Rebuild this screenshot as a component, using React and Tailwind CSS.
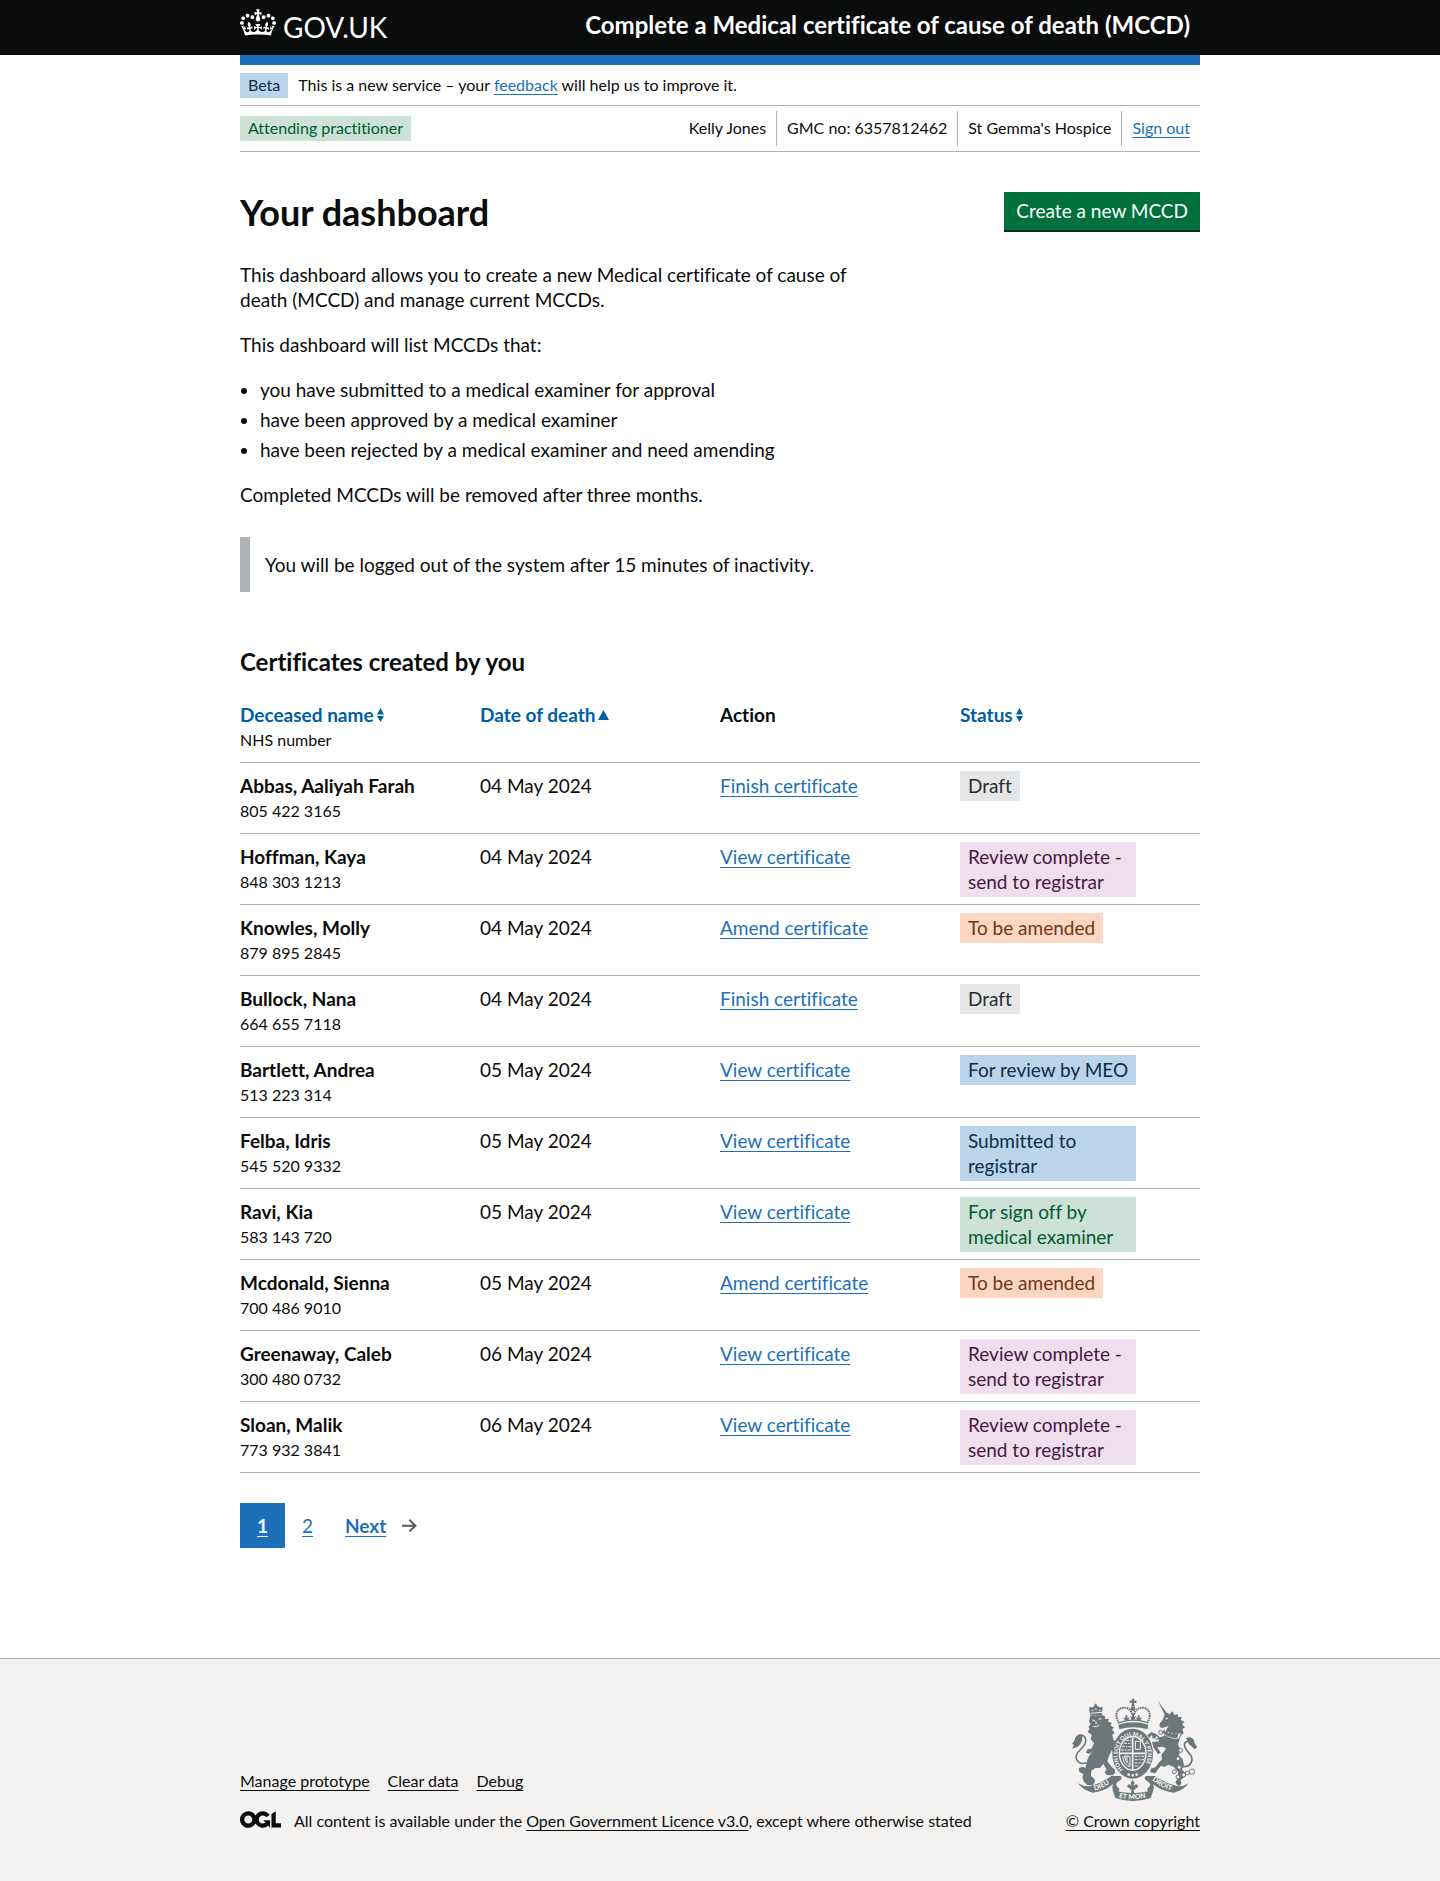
import React from "react";

const TAGS = {
  grey: "bg-[#e5e6e7] text-[#282d30]",
  purple: "bg-[#efdfed] text-[#491644]",
  orange: "bg-[#fcd6c3] text-[#6e3619]",
  blue: "bg-[#bbd4ea] text-[#0c2d4a]",
  green: "bg-[#cce2d8] text-[#005a30]",
};

const DRAFT = ["Finish certificate", "Draft", "grey"];
const COMPLETE = ["View certificate", "Review complete - send to registrar", "purple"];
const AMEND = ["Amend certificate", "To be amended", "orange"];

const ROWS = [
  ["Abbas, Aaliyah Farah", "805 422 3165", "04 May 2024", ...DRAFT],
  ["Hoffman, Kaya", "848 303 1213", "04 May 2024", ...COMPLETE],
  ["Knowles, Molly", "879 895 2845", "04 May 2024", ...AMEND],
  ["Bullock, Nana", "664 655 7118", "04 May 2024", ...DRAFT],
  ["Bartlett, Andrea", "513 223 314", "05 May 2024", "View certificate", "For review by MEO", "blue"],
  ["Felba, Idris", "545 520 9332", "05 May 2024", "View certificate", "Submitted to registrar", "blue"],
  ["Ravi, Kia", "583 143 720", "05 May 2024", "View certificate", "For sign off by medical examiner", "green"],
  ["Mcdonald, Sienna", "700 486 9010", "05 May 2024", ...AMEND],
  ["Greenaway, Caleb", "300 480 0732", "06 May 2024", ...COMPLETE],
  ["Sloan, Malik", "773 932 3841", "06 May 2024", ...COMPLETE],
];

function Link({ className = "text-[#1d70b8]", children }) {
  return (
    <a
      href="#"
      className={
        "underline decoration-1 underline-offset-[3px] [text-decoration-skip-ink:none] " + className
      }
    >
      {children}
    </a>
  );
}

function Container({ className = "", children }) {
  return <div className={"mx-auto w-full max-w-[960px] " + className}>{children}</div>;
}

function StatusTag({ tone, children }) {
  // Short labels stay on one line; longer ones wrap inside the tag.
  const width = children.length > 18 ? "max-w-44" : "whitespace-nowrap";
  return (
    <strong className={`block w-fit px-2 pt-[2px] pb-[3px] font-normal ${width} ${TAGS[tone]}`}>
      {children}
    </strong>
  );
}

function Crown() {
  return (
    <svg viewBox="0 0 132 97" className="h-[27px] w-9" fill="currentColor" aria-hidden="true">
      <path d="M25 30.2c3.5 1.5 7.7-.2 9.1-3.7 1.5-3.6-.2-7.8-3.9-9.2-3.6-1.4-7.6.3-9.1 3.9-1.4 3.5.3 7.5 3.9 9zM9 39.5c3.6 1.5 7.8-.2 9.2-3.7 1.5-3.6-.2-7.8-3.9-9.1-3.6-1.5-7.6.2-9.1 3.8-1.4 3.5.3 7.5 3.8 9zM4.4 57.2c3.5 1.5 7.7-.2 9.1-3.8 1.5-3.6-.2-7.7-3.9-9.1-3.5-1.5-7.6.3-9.1 3.8-1.4 3.5.3 7.6 3.9 9.1zm38.3-21.4c3.5 1.5 7.7-.2 9.1-3.8 1.5-3.6-.2-7.7-3.9-9.1-3.6-1.5-7.6.3-9.1 3.8-1.3 3.6.4 7.7 3.9 9.1zm64.4-5.6c-3.6 1.5-7.8-.2-9.1-3.7-1.5-3.6.2-7.8 3.8-9.2 3.6-1.4 7.7.3 9.2 3.9 1.3 3.5-.4 7.5-3.9 9zm15.9 9.3c-3.6 1.5-7.7-.2-9.1-3.7-1.5-3.6.2-7.8 3.7-9.1 3.6-1.5 7.7.2 9.2 3.8 1.5 3.5-.3 7.5-3.8 9zm4.7 17.7c-3.6 1.5-7.8-.2-9.2-3.8-1.5-3.6.2-7.7 3.9-9.1 3.6-1.5 7.7.3 9.2 3.8 1.3 3.5-.4 7.6-3.9 9.1zM89.3 35.8c-3.6 1.5-7.8-.2-9.2-3.8-1.4-3.6.2-7.7 3.9-9.1 3.6-1.5 7.7.3 9.2 3.8 1.4 3.6-.3 7.7-3.9 9.1zM69.7 17.7l8.9 4.7V9.3l-8.9 2.8c-.2-.3-.5-.6-.9-.9L72.4 0H59.6l3.5 11.2c-.3.3-.6.5-.9.9l-8.8-2.8v13.1l8.8-4.7c.3.3.6.7.9.9l-5 15.4v.1c-.2.8-.4 1.6-.4 2.4 0 4.1 3.1 7.5 7 8.1h.2c.3 0 .7.1 1 .1.4 0 .7 0 1-.1h.2c4-.6 7.1-4.1 7.1-8.1 0-.8-.1-1.7-.4-2.4V34l-5.1-15.4c.4-.2.7-.6 1-.9zM66 92.8c16.9 0 32.8 1.1 47.1 3.2 4-16.9 8.9-26.7 14-33.5l-9.6-3.4c1 4.9 1.1 7.2 0 10.2-1.5-1.4-3-4.3-4.2-8.7L108.6 76c2.8-2 5-3.2 7.5-3.3-4.4 9.4-10 11.9-13.6 11.2-4.3-.8-6.3-4.6-5.6-7.9 1-4.7 5.7-5.9 8-.5 4.3-8.7-3-11.4-7.6-8.8 7.1-7.2 7.9-13.5 2.1-21.1-8 6.1-8.1 12.3-4.5 20.8-4.7-5.4-12.1-2.5-9.5 6.2 3.4-5.2 7.9-2 7.2 3.1-.6 4.3-6.4 7.8-13.5 7.2-10.3-.9-10.9-8-11.2-13.8 2.5-.5 7.1 1.8 11 7.3L80.2 60c-4.1 4.4-8 5.3-12.3 5.4 1.4-4.4 8-11.6 8-11.6H55.5s6.4 7.2 7.9 11.6c-4.2-.1-8-1-12.3-5.4l1.4 16.4c3.9-5.5 8.5-7.7 10.9-7.3-.3 5.8-.9 12.8-11.1 13.8-7.2.6-12.9-2.9-13.5-7.2-.7-5 3.8-8.3 7.1-3.1 2.7-8.7-4.6-11.6-9.4-6.2 3.7-8.5 3.6-14.7-4.6-20.8-5.8 7.6-5 13.9 2.2 21.1-4.7-2.6-11.9.1-7.7 8.8 2.3-5.5 7.1-4.2 8.1.5.7 3.3-1.3 7.1-5.7 7.9-3.5.7-9-1.8-13.5-11.2 2.5.1 4.7 1.3 7.5 3.3l-4.7-15.4c-1.2 4.4-2.7 7.2-4.3 8.7-1.1-3-.9-5.3 0-10.2l-9.5 3.4c5 6.9 9.9 16.7 14 33.5 14.8-2.1 30.8-3.2 47.7-3.2z" />
    </svg>
  );
}

function Crest() {
  const ink = "#6d7779";
  const paper = "#f3f2f1";
  return (
    <svg viewBox="60 51 390 315" className="h-[105px] w-[130px]" aria-hidden="true">
      <defs>
        <path id="garter" d="M219 269 A45 57 0 1 1 277 269" />
        <path id="scroll-left" d="M134 332 Q162 324 188 304" />
        <path id="scroll-right" d="M306 301 Q332 322 366 333" />
        <path id="scroll-mid" d="M206 353 Q248 363 296 351" />
      </defs>

      {/* lion */}
      <g fill={ink}>
        <path d="M117 90 L119 80 Q126 84 130 80 L134 76 L134 71 L140 71 L140 76 L146 81 Q152 83 158 80 L155 104 L122 107 Z" />
        <path d="M121 108 L156 104 L166 110 L164 116 L178 118 L173 124 L186 130 L181 136 L192 143 L186 149 L194 158 L187 164 L190 178 L200 188 L203 200 L194 204 L199 214 L190 222 L186 210 L176 230 L172 244 L186 262 L194 268 L196 278 L188 286 L170 285 L164 277 L170 269 L160 252 L150 264 L136 264 L124 272 L123 288 L133 296 L135 306 L128 316 L112 315 L102 306 L97 292 L100 282 L88 276 L86 264 L98 260 L106 264 L110 246 C113 232 122 224 126 214 L118 222 L108 218 L112 208 L124 206 L132 190 L122 178 L125 164 L113 156 L118 148 L116 140 L122 132 L117 124 Z" />
      </g>
      <g fill="none" stroke={paper} strokeWidth="3">
        <path d="M125 91h5M135 87h5M147 91h5M122 100l34-3" />
        <path d="M127 120l8 2M145 118l10-2M137 124l2 9M130 139q10 4 18-3" />
      </g>
      <path d="M108 248 C84 258 66 232 90 210 C112 190 112 172 96 166 C84 163 78 172 84 180" fill="none" stroke={ink} strokeWidth="5" />
      <path d="M92 162 Q76 166 74 180 L66 192 L72 194 L66 206 L80 202 L90 194 Q100 180 96 168 Z" fill={ink} />

      {/* royal crown */}
      <g fill={ink}>
        <path d="M245 56h8l-1 7 7-2v9l-7-2 2 11h-10l2-11-7 2v-9l7 2z" />
        <circle cx="249" cy="86" r="7" />
        <path d="M205 134 Q249 120 295 134 L292 148 Q249 136 208 148 Z" />
        <path d="M225 122l-5-10 6 2 0-8 6 0 0 8 7-2-5 10zM262 122l-5-10 6 2 0-8 6 0 0 8 7-2-5 10zM244 120l-3-12 5 2 0-8 6 0 0 8 6-2-4 12z" />
      </g>
      <path d="M208 130 C188 100 206 82 224 83 C238 84 244 92 246 104 M291 130 C310 100 292 82 276 83 C262 84 255 92 252 104" fill="none" stroke={ink} strokeWidth="6" strokeDasharray="5 2" />
      <path d="M210 127 Q249 114 290 127" fill="none" stroke={ink} strokeWidth="4" />

      {/* garter and shield */}
      <ellipse cx="248" cy="221" rx="61" ry="75" fill={ink} />
      <ellipse cx="248" cy="220" rx="42" ry="53" fill={paper} />
      <ellipse cx="248" cy="220" rx="38" ry="48" fill={ink} />
      <g fill="none" stroke={paper}>
        <path d="M248 172v96M210 220h76" strokeWidth="5" />
        <path d="M222 190h22M215 200h29M213 210h30M228 181h16M254 229h30M254 239h28M254 249h22M254 258h14" strokeWidth="3" strokeDasharray="9 3 5 3" />
        <path d="M256 184h15v24h-15z" strokeWidth="3" />
        <path d="M218 232q4 24 22 28M224 230q2 16 14 24M231 229v18M218 232q10-8 22-2v28" strokeWidth="3" />
      </g>
      <g fill={paper} fontFamily="Lato, sans-serif" fontWeight="900" fontSize="17">
        <text>
          <textPath href="#garter">HONI SOIT QUI MAL Y PENSE</textPath>
        </text>
      </g>
      <g fill={paper}>
        <circle cx="236" cy="284" r="4" />
        <circle cx="248" cy="286" r="4" />
        <circle cx="260" cy="284" r="4" />
      </g>

      {/* unicorn */}
      <path d="M324 63 L352 101 L345 106 Z" fill={ink} />
      <path
        fill={ink}
        d="M343 106 L352 98 L358 103 L368 94 L372 104 L384 103 L384 111 L396 112 L392 120 L404 126 L396 132 L405 142 L397 148 L401 160 L393 166 L388 180 L384 194 L391 208 L387 226 L398 238 L402 256 L396 268 L406 280 L402 292 L392 300 L394 312 L386 319 L376 308 L384 292 L384 276 L372 262 L356 254 L344 260 L332 258 L324 268 L316 280 L301 277 L302 266 L316 262 L328 246 L336 238 L334 224 L348 206 L340 200 L322 202 L332 218 L324 223 L310 202 L306 186 L328 184 L322 172 L308 176 L306 164 L298 174 L292 166 L304 156 L318 162 L330 172 L342 168 L348 150 L356 138 L344 142 L334 144 L328 138 L330 130 L338 120 Z"
      />
      <path d="M346 117l8-2" stroke={paper} strokeWidth="3" />
      <path d="M340 146 Q362 164 392 160 L386 176 Q356 178 336 158 Z" fill={paper} />
      <path d="M342 147l4 8 5-4 4 8 6-4 5 7 6-5 6 5 8-4-4 16q-24 2-44-16z" fill={ink} />
      <path d="M398 260 C420 262 436 240 418 220 C402 204 398 188 412 184 C424 180 430 188 428 196" fill="none" stroke={ink} strokeWidth="5" />
      <path d="M408 174 Q424 168 432 180 L434 190 L442 202 L434 208 L426 200 L418 194 Z" fill={ink} />
      <g fill={paper} stroke={ink} strokeWidth="3">
        <circle cx="332" cy="157" r="6" />
        <circle cx="320" cy="173" r="5" />
        <circle cx="392" cy="211" r="6" />
        <circle cx="384" cy="236" r="6" />
        <circle cx="388" cy="262" r="6" />
        <circle cx="373" cy="275" r="6" />
        <circle cx="384" cy="291" r="6" />
        <circle cx="401" cy="285" r="6" />
        <circle cx="412" cy="279" r="6" />
        <circle cx="426" cy="275" r="8" />
      </g>

      {/* motto scrolls */}
      <path d="M84 310 Q104 322 122 318 Q158 308 184 288 L212 288 Q220 296 206 304 Q190 314 208 326 L204 344 Q180 330 190 312 Q160 336 128 338 Q98 330 84 310 Z" fill={ink} />
      <path d="M416 310 Q396 322 380 318 Q342 308 314 288 L288 288 Q278 296 292 304 Q310 314 292 326 L294 344 Q320 330 308 312 Q340 336 372 338 Q402 330 416 310 Z" fill={ink} />
      <path d="M188 330 Q248 350 310 330 L302 354 Q248 372 196 354 Z" fill={ink} />
      <path d="M248 299l6 10q-2 6-3 9 10-10 13 0 1 6-8 7v4h-5l2 12h-10l2-12h-5v-4q-9-1-8-7 3-10 13 0-1-3-3-9z" fill={ink} />
      <g fill={paper} fontFamily="Lato, sans-serif" fontWeight="900" fontSize="21">
        <text>
          <textPath href="#scroll-left">DIEU</textPath>
        </text>
        <text>
          <textPath href="#scroll-right">DROIT</textPath>
        </text>
        <text>
          <textPath href="#scroll-mid">ET MON</textPath>
        </text>
      </g>
    </svg>
  );
}

function SortBoth() {
  return (
    <svg viewBox="0 0 7 14" className="h-[14px] w-[7px]" fill="currentColor" aria-hidden="true">
      <path d="M3.5 0 7 6.5H0zM3.5 14 0 8h7z" />
    </svg>
  );
}

function SortUp() {
  return (
    <svg viewBox="0 0 11 10" className="h-[10px] w-[11px]" fill="currentColor" aria-hidden="true">
      <path d="M5.5 0 11 10H0z" />
    </svg>
  );
}

function SortButton({ icon, children }) {
  return (
    <button type="button" className="flex items-center gap-[3px] font-bold text-[#005ea5]">
      {children}
      {icon}
    </button>
  );
}

export default function App() {
  return (
    <div className="bg-white font-['Lato',sans-serif] text-[19px] leading-[25px] text-[#0b0c0c] [font-variant-ligatures:none]">
      <header className="bg-[#0b0c0c] text-white">
        <Container className="flex h-[55px] items-center justify-between pr-[10px] pb-[6px]">
          <a href="#" className="flex items-center gap-[7px] pb-1" aria-label="GOV.UK">
            <Crown />
            <span className="pt-2 text-[28px] leading-[30px]">GOV.UK</span>
          </a>
          <a href="#" className="text-2xl leading-[30px] font-bold">
            Complete a Medical certificate of cause of death (MCCD)
          </a>
        </Container>
      </header>

      <Container className="border-t-[10px] border-[#1d70b8] text-base leading-5">
        <div className="flex items-center gap-[10px] border-b border-[#b1b4b6] pt-2 pb-[7px]">
          <strong className="bg-[#bbd4ea] px-2 pt-[2px] pb-[3px] font-normal text-[#0c2d4a]">Beta</strong>
          <span className="pb-px">
            This is a new service – your <Link>feedback</Link> will help us to improve it.
          </span>
        </div>
        <div className="flex items-center justify-between border-b border-[#b1b4b6] py-[5px]">
          <strong className="bg-[#cce2d8] px-2 pt-[2px] pb-[3px] font-normal text-[#005a30]">
            Attending practitioner
          </strong>
          <ul className="flex">
            <li className="border-r border-[#b1b4b6] px-[10px] pt-[7px] pb-2">Kelly Jones</li>
            <li className="border-r border-[#b1b4b6] px-[10px] pt-[7px] pb-2">GMC no: 6357812462</li>
            <li className="border-r border-[#b1b4b6] px-[10px] pt-[7px] pb-2">St Gemma's Hospice</li>
            <li className="px-[10px] pt-[7px] pb-2">
              <Link>Sign out</Link>
            </li>
          </ul>
        </div>
      </Container>

      <Container className="pt-10">
        <main>
          <div className="mb-[30px] flex items-start justify-between">
            <h1 className="text-4xl leading-10 font-bold">Your dashboard</h1>
            <button
              type="button"
              className="bg-[#00703c] px-3 pt-[6px] pb-[7px] text-white shadow-[0_2px_0_#002d18]"
            >
              Create a new MCCD
            </button>
          </div>

          <div className="flex max-w-[630px] flex-col gap-5">
            <p>
              This dashboard allows you to create a new Medical certificate of cause of death (MCCD) and
              manage current MCCDs.
            </p>
            <p>This dashboard will list MCCDs that:</p>
            <ul className="flex list-disc flex-col gap-[5px] pl-5">
              <li>you have submitted to a medical examiner for approval</li>
              <li>have been approved by a medical examiner</li>
              <li>have been rejected by a medical examiner and need amending</li>
            </ul>
            <p>Completed MCCDs will be removed after three months.</p>
          </div>

          <div className="mt-[30px] border-l-[10px] border-[#b1b4b6] p-[15px]">
            You will be logged out of the system after 15 minutes of inactivity.
          </div>

          <h2 className="mt-[55px] mb-[15px] text-2xl leading-[30px] font-bold">
            Certificates created by you
          </h2>

          <table className="w-full table-fixed border-collapse text-left">
            <thead>
              <tr className="border-b border-[#b1b4b6] align-top">
                <th scope="col" aria-sort="none" className="py-[10px]">
                  <SortButton icon={<SortBoth />}>Deceased name</SortButton>
                  <span className="block text-base leading-[25px] font-normal">NHS number</span>
                </th>
                <th scope="col" aria-sort="ascending" className="py-[10px]">
                  <SortButton icon={<SortUp />}>Date of death</SortButton>
                </th>
                <th scope="col" className="py-[10px] font-bold">
                  Action
                </th>
                <th scope="col" aria-sort="none" className="py-[10px]">
                  <SortButton icon={<SortBoth />}>Status</SortButton>
                </th>
              </tr>
            </thead>
            <tbody>
              {ROWS.map(([name, nhs, date, action, status, tone]) => (
                <tr key={name} className="border-b border-[#b1b4b6] align-top">
                  <th scope="row" className="py-[10px] font-bold">
                    {name}
                    <span className="block text-base leading-[25px] font-normal">{nhs}</span>
                  </th>
                  <td className="py-[10px]">{date}</td>
                  <td className="py-[10px]">
                    <Link>{action}</Link>
                  </td>
                  <td className="pt-2 pb-[7px]">
                    <StatusTag tone={tone}>{status}</StatusTag>
                  </td>
                </tr>
              ))}
            </tbody>
          </table>

          <nav aria-label="Pagination" className="mt-[30px] flex h-[45px] items-center">
            <span className="flex h-[45px] w-[45px] items-center justify-center bg-[#1d70b8]">
              <Link className="font-bold text-white">1</Link>
            </span>
            <span className="flex w-[45px] justify-center">
              <Link>2</Link>
            </span>
            <span className="flex items-center gap-4 px-[15px]">
              <Link className="font-bold text-[#1d70b8]">Next</Link>
              <svg viewBox="0 0 15 13" className="h-[13px] w-[15px]" fill="#505a5f" aria-hidden="true">
                <path d="m8.107-0.0078125-1.4136 1.414 4.2926 4.293h-12.986v2h12.896l-4.1855 3.9766 1.377 1.4492 6.7441-6.4062-6.7246-6.7266z" />
              </svg>
            </span>
          </nav>
        </main>
      </Container>

      <footer className="mt-[110px] border-t border-[#b1b4b6] bg-[#f3f2f1] pt-[38px] pb-[50px] text-base leading-5">
        <Container className="flex items-end justify-between">
          <div className="flex flex-col gap-5">
            <div className="flex gap-[18px]">
              <Link className="text-[#0b0c0c]">Manage prototype</Link>
              <Link className="text-[#0b0c0c]">Clear data</Link>
              <Link className="text-[#0b0c0c]">Debug</Link>
            </div>
            <div className="flex items-start gap-[13px]">
              <svg viewBox="0 0 483.2 195.7" className="h-[17px] w-[41px]" fill="currentColor" aria-hidden="true">
                <path d="M421.5 142.8V.1l-50.7 32.3v161.1h112.4v-50.7zm-122.3-9.6A47.12 47.12 0 0 1 221 97.8c0-26 21.1-47.1 47.1-47.1 16.7 0 31.4 8.7 39.7 21.8l42.7-27.2A97.63 97.63 0 0 0 268.1 0c-36.5 0-68.3 20.1-85.1 49.7A98 98 0 0 0 97.8 0C43.9 0 0 43.9 0 97.8s43.9 97.8 97.8 97.8c36.5 0 68.3-20.1 85.1-49.7a97.76 97.76 0 0 0 149.6 25.4l19.4 22.2h3v-87.8h-80l24.3 27.5zM97.8 145c-26 0-47.1-21.1-47.1-47.1s21.1-47.1 47.1-47.1 47.1 21.1 47.1 47.1S123.8 145 97.8 145" />
              </svg>
              <span>
                All content is available under the{" "}
                <Link className="text-[#0b0c0c]">Open Government Licence v3.0</Link>, except where
                otherwise stated
              </span>
            </div>
          </div>
          <div className="flex flex-col items-end gap-[9px]">
            <Crest />
            <Link className="text-[#0b0c0c]">© Crown copyright</Link>
          </div>
        </Container>
      </footer>
    </div>
  );
}
